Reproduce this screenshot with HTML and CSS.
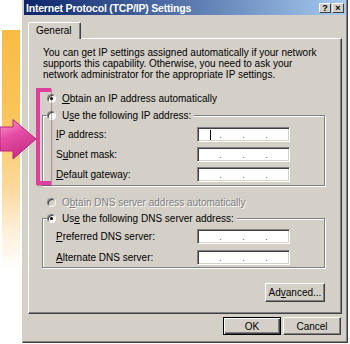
FILE: index.html
```html
<!DOCTYPE html>
<html lang="en">

<head>
  <meta charset="UTF-8">
  <title>Internet Protocol (TCP/IP) Settings</title>
  <link rel="stylesheet" href="styles.css">
</head>

<body>
  <div class="strip"></div>

  <div class="window">
    <div class="titlebar">
      <span class="title">Internet Protocol (TCP/IP) Settings</span>
      <div class="tb-buttons">
        <span class="tb-btn">?</span>
        <span class="tb-btn">×</span>
      </div>
    </div>

    <div class="dialog">
      <div class="tabs">
        <div class="tab">General</div>
      </div>

      <div class="panel">
        <p class="intro">You can get IP settings assigned automatically if your network<br>supports this capability. Otherwise, you need to ask your<br>network administrator for the appropriate IP settings.</p>

        <div class="radio"><span class="dot checked"></span><span><u>O</u>btain an IP address automatically</span></div>

        <fieldset class="group">
          <legend class="radio"><span class="dot"></span><span>U<u>s</u>e the following IP address:</span></legend>
          <div class="rows">
            <div class="row">
              <span class="label"><u>I</u>P address:</span>
              <div class="ip"><span class="seg"><i class="caret"></i></span><b>.</b><span class="seg"></span><b>.</b><span class="seg"></span><b>.</b><span class="seg"></span></div>
            </div>
            <div class="row">
              <span class="label">S<u>u</u>bnet mask:</span>
              <div class="ip"><span class="seg"></span><b>.</b><span class="seg"></span><b>.</b><span class="seg"></span><b>.</b><span class="seg"></span></div>
            </div>
            <div class="row">
              <span class="label"><u>D</u>efault gateway:</span>
              <div class="ip"><span class="seg"></span><b>.</b><span class="seg"></span><b>.</b><span class="seg"></span><b>.</b><span class="seg"></span></div>
            </div>
          </div>
        </fieldset>

        <div class="radio disabled"><span class="dot"></span><span>O<u>b</u>tain DNS server address automatically</span></div>

        <fieldset class="group dns">
          <legend class="radio"><span class="dot checked"></span><span>Us<u>e</u> the following DNS server address:</span></legend>
          <div class="rows">
            <div class="row">
              <span class="label"><u>P</u>referred DNS server:</span>
              <div class="ip"><span class="seg"></span><b>.</b><span class="seg"></span><b>.</b><span class="seg"></span><b>.</b><span class="seg"></span></div>
            </div>
            <div class="row">
              <span class="label"><u>A</u>lternate DNS server:</span>
              <div class="ip"><span class="seg"></span><b>.</b><span class="seg"></span><b>.</b><span class="seg"></span><b>.</b><span class="seg"></span></div>
            </div>
          </div>
        </fieldset>

        <div class="adv-row">
          <button class="btn adv">Ad<u>v</u>anced...</button>
        </div>
      </div>

      <div class="actions">
        <button class="btn default">OK</button>
        <button class="btn">Cancel</button>
      </div>
    </div>
  </div>

  <!-- callout marks drawn over the dialog -->
  <svg class="arrow" width="38" height="42" viewBox="0 0 38 42">
    <defs>
      <linearGradient id="pink" x1="0" y1="0" x2="0.4" y2="1">
        <stop offset="0" stop-color="#f7a3d4" />
        <stop offset="0.45" stop-color="#e64ea5" />
        <stop offset="1" stop-color="#c92d86" />
      </linearGradient>
    </defs>
    <polygon points="0,8 13,8 13,0.5 36,20 13,40 13,32 0,32" fill="url(#pink)" stroke="#b8287a" stroke-width="1" />
  </svg>
  <div class="bracket"></div>
</body>

</html>
```

FILE: styles.css
```css
* {
  margin: 0;
  padding: 0;
  box-sizing: border-box;
}

body {
  width: 350px;
  height: 344px;
  overflow: hidden;
  position: relative;
  background-color: #fff;
  color: #000;
  font-family: 'Liberation Sans', Arial, sans-serif;
  font-size: 10px;
}

u {
  text-underline-offset: 1px;
}

.strip {
  position: absolute;
  left: 2px;
  top: 30px;
  width: 18px;
  height: 240px;
  background: linear-gradient(to bottom, #f9bb45 0%, #fbc45a 35%, #fcd89a 65%, #fef1de 85%, #fff 100%);
}

.window {
  margin-left: 22px;
  width: 326px;
  height: 343px;
  background-color: #d4d0c8;
  border-left: 1px solid #d4d0c8;
  border-right: 1px solid #404040;
  border-bottom: 1px solid #404040;
  box-shadow: inset -1px -1px #808080;
  padding: 0 1px;
  display: flex;
  flex-direction: column;
}

.titlebar {
  height: 15px;
  display: flex;
  align-items: center;
  justify-content: space-between;
  padding: 0 2px 0 2px;
  background: linear-gradient(to right, #0a246a, #a6caf0);
}

.title {
  color: #fff;
  font-weight: 700;
  font-size: 10.5px;
  letter-spacing: -0.2px;
  white-space: nowrap;
}

.tb-buttons {
  display: flex;
  gap: 1px;
}

.tb-btn {
  width: 12px;
  height: 10px;
  background-color: #d4d0c8;
  border: 1px solid;
  border-color: #fff #404040 #404040 #fff;
  font-size: 9px;
  font-weight: 700;
  line-height: 8px;
  text-align: center;
}

.dialog {
  flex: 1;
  display: flex;
  flex-direction: column;
  padding: 7px 4px 0 4px;
}

.tabs {
  display: flex;
  position: relative;
  z-index: 1;
  margin-bottom: -1px;
}

.tab {
  height: 17px;
  padding: 1px 8px 0 7px;
  background-color: #d4d0c8;
  border: 1px solid;
  border-bottom: none;
  border-color: #fff #404040 #d4d0c8 #fff;
  border-radius: 2px 2px 0 0;
  box-shadow: inset -1px 0 #808080;
  line-height: 13px;
}

.panel {
  height: 276px;
  display: flex;
  flex-direction: column;
  border: 1px solid;
  border-color: #fff #404040 #404040 #fff;
  box-shadow: inset -1px -1px #808080;
  padding-bottom: 11px;
}

.intro {
  margin: 8px 0 0 14px;
  line-height: 11px;
  white-space: nowrap;
}

.radio {
  display: flex;
  align-items: center;
  gap: 6px;
  height: 12px;
  white-space: nowrap;
}

.panel > .radio {
  margin: 12px 0 0 18px;
}

.panel > .radio.disabled {
  margin-top: 10px;
  color: #808080;
  text-shadow: 1px 1px #fff;
}

.dot {
  position: relative;
  width: 9px;
  height: 9px;
  border-radius: 50%;
  background-color: #fff;
  border: 1px solid;
  border-color: #808080 #fff #fff #808080;
  box-shadow: inset 1px 1px #404040;
}

.dot.checked::after {
  content: '';
  position: absolute;
  left: 2px;
  top: 2px;
  width: 3px;
  height: 3px;
  border-radius: 50%;
  background-color: #000;
}

.disabled .dot {
  background-color: #d4d0c8;
}

.group {
  margin: 5px 16px 0 13px;
  padding: 0 0 0 4px;
  border: 1px solid #808080;
  box-shadow: inset 1px 1px #fff, 1px 1px #fff;
}

.group legend {
  padding-right: 3px;
  background-color: #d4d0c8;
}

.group.dns {
  margin-top: 4px;
}

.rows {
  display: flex;
  flex-direction: column;
  gap: 5px;
  padding: 6px 0 3px 9px;
}

.dns .rows {
  gap: 6px;
  padding: 5px 0 2px 9px;
}

.row {
  display: flex;
  align-items: center;
  height: 15px;
}

.label {
  width: 141px;
  white-space: nowrap;
}

.ip {
  width: 93px;
  height: 15px;
  display: grid;
  grid-template-columns: 1fr 3px 1fr 3px 1fr 3px 1fr;
  background-color: #fff;
  border: 1px solid;
  border-color: #808080 #fff #fff #808080;
  box-shadow: inset 1px 1px #404040, inset -1px -1px #d4d0c8;
  padding: 1px;
}

.ip b {
  font-weight: 400;
  color: #555;
  font-size: 9px;
  line-height: 12px;
  text-align: center;
}

.seg {
  position: relative;
}

.caret {
  position: absolute;
  left: 11px;
  top: 1px;
  width: 1px;
  height: 10px;
  background-color: #000;
}

.adv-row {
  margin-top: auto;
  display: flex;
  justify-content: flex-end;
  padding-right: 16px;
}

.btn {
  width: 58px;
  height: 18px;
  background-color: #d4d0c8;
  color: #000;
  font-family: inherit;
  font-size: 10px;
  border: 1px solid;
  border-color: #fff #404040 #404040 #fff;
  box-shadow: inset -1px -1px #808080;
}

.btn.adv {
  width: 60px;
  height: 19px;
}

.btn.default {
  border-color: #000;
  box-shadow: inset 1px 1px #fff, inset -1px -1px #404040, inset -2px -2px #808080;
}

.actions {
  display: flex;
  justify-content: flex-end;
  gap: 2px;
  margin-top: 3px;
  padding-right: 1px;
}

.arrow {
  position: absolute;
  left: 0;
  top: 119px;
}

.bracket {
  position: absolute;
  left: 36px;
  top: 88px;
  width: 15px;
  height: 97px;
  border: 4px solid #dd3f9c;
  border-right: none;
  box-shadow: 1px 1px 1px rgba(120, 20, 80, 0.35);
}
```
